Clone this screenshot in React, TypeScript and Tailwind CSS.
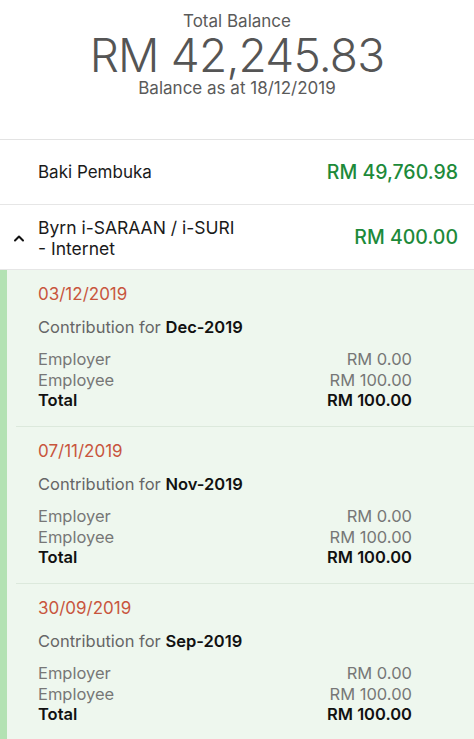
import React from "react";

const items = [
  { date: "03/12/2019", month: "Dec-2019" },
  { date: "07/11/2019", month: "Nov-2019" },
  { date: "30/09/2019", month: "Sep-2019" },
];

const App: React.FC = () => {
  return (
    <div
      className="w-[474px] h-[739px] overflow-hidden bg-white"
      style={{ fontFamily: "Inter, 'Noto Sans', sans-serif" }}
    >
      {/* header */}
      <div className="h-[140px] flex flex-col items-center pt-[11px] text-[#5a5a5a] border-b border-[#e3e3e3]">
        <div className="text-[17px] leading-[20px]">Total Balance</div>
        <div className="text-[46px] leading-[48px] font-light tracking-[-0.8px] text-[#555]">
          RM 42,245.83
        </div>
        <div className="text-[17px] leading-[18px]">
          Balance as at 18/12/2019
        </div>
      </div>

      {/* opening balance */}
      <div className="h-[65px] flex items-center justify-between pl-[38px] pr-[16px] border-b border-[#e6e6e6] pt-[2px]">
        <span className="text-[17px] text-[#1a1a1a]">Baki Pembuka</span>
        <span className="text-[19.5px] font-medium text-[#1d8a3a]">RM 49,760.98</span>
      </div>

      {/* group row */}
      <div className="h-[65px] flex items-center justify-between pr-[16px] border-b border-[#e6e6e6] pt-[2px]">
        <div className="flex items-center">
          <div className="w-[38px] flex justify-center">
            <svg width="12" height="8" viewBox="0 0 12 8" fill="none">
              <path
                d="M2 6.5 L6 2.5 L10 6.5"
                stroke="#111"
                strokeWidth="2"
                strokeLinecap="round"
                strokeLinejoin="round"
              />
            </svg>
          </div>
          <div className="text-[17.5px] leading-[21px] text-[#1a1a1a]">
            Byrn i-SARAAN / i-SURI
            <br />- Internet
          </div>
        </div>
        <span className="text-[19.5px] font-medium text-[#1d8a3a]">RM 400.00</span>
      </div>

      {/* transactions */}
      <div className="flex bg-[#eef7ee]">
        <div className="w-[7px] bg-[#b3e2b3] shrink-0" />
        <div className="flex-1 pl-[9px]">
          {items.map((it, i) => (
            <div
              key={i}
              className="h-[157px] border-b border-[#dce9dc] pl-[22px] pr-[46px] pt-[13px]"
            >
              <div className="text-[17px] leading-[22px] text-[#c8553d]">{it.date}</div>
              <div className="text-[16.5px] leading-[22px] text-[#666] mt-[11px]">
                Contribution for{" "}
                <span className="font-semibold text-[#111]">{it.month}</span>
              </div>
              <div className="mt-[11px] text-[16.5px] leading-[20.5px] pr-[16px]">
                <div className="flex justify-between text-[#777]">
                  <span>Employer</span>
                  <span>RM 0.00</span>
                </div>
                <div className="flex justify-between text-[#777]">
                  <span>Employee</span>
                  <span>RM 100.00</span>
                </div>
                <div className="flex justify-between font-semibold text-[#111]">
                  <span>Total</span>
                  <span>RM 100.00</span>
                </div>
              </div>
            </div>
          ))}
        </div>
      </div>
    </div>
  );
};

export default App;
